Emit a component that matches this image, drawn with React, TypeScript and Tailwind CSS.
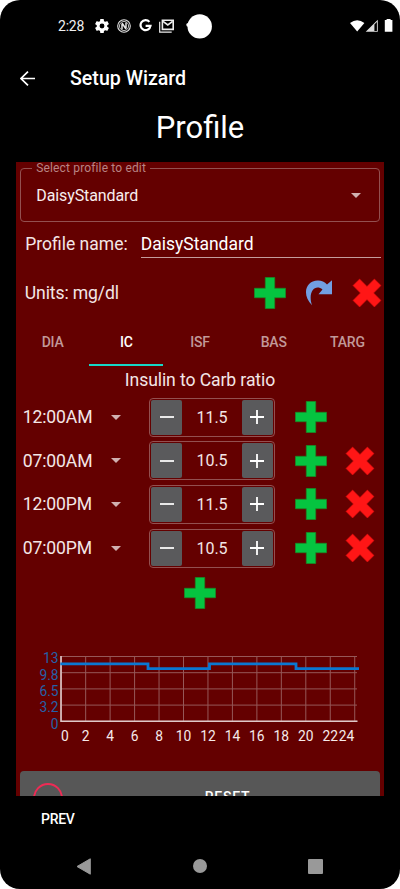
import React from "react";

function Plus({ className = "" }: { className?: string }) {
  return (
    <svg className={`h-8 w-8 shrink-0 ${className}`} viewBox="0 0 32 32">
      <path
        d="M11.3 .5h9.4v10.8h10.8v9.4H20.7v10.8h-9.4V20.7H.5v-9.4h10.8z"
        fill="#05c440"
        stroke="#1a8a26"
        strokeWidth="0.8"
      />
    </svg>
  );
}

function Cross({ className = "" }: { className?: string }) {
  return (
    <svg className={`h-[30px] w-[30px] shrink-0 ${className}`} viewBox="0 0 30 30">
      <path
        d="M7.6 1L15 8.4L22.4 1L29 7.6L21.6 15L29 22.4L22.4 29L15 21.6L7.6 29L1 22.4L8.4 15L1 7.6z"
        fill="#ff1616"
        stroke="#d80c0c"
        strokeWidth="0.6"
      />
    </svg>
  );
}

function Caret({ className = "" }: { className?: string }) {
  return (
    <svg className={`h-[5px] w-[10px] shrink-0 ${className}`} viewBox="0 0 10 5">
      <path d="M0 0h10L5 5z" fill="#d0b0b0" />
    </svg>
  );
}

function StatusBar() {
  return (
    <div className="relative flex h-[52px] items-center pb-[1px]">
      <span className="ml-[58px] w-[37px] text-[14px] leading-none tracking-[-0.2px] text-[#f0f0f0]">2:28</span>
      <svg className="h-[14px] w-[14px]" viewBox="2 2 20 20" fill="#fff">
        <path
          fillRule="evenodd"
          d="M19.43 12.98c.04-.32.07-.64.07-.98s-.03-.66-.07-.98l2.11-1.65c.19-.15.24-.42.12-.64l-2-3.46c-.12-.22-.39-.3-.61-.22l-2.49 1c-.52-.4-1.08-.73-1.69-.98l-.38-2.65A.49.49 0 0 0 14 2h-4c-.25 0-.46.18-.49.42l-.38 2.65c-.61.25-1.17.59-1.69.98l-2.49-1c-.23-.09-.49 0-.61.22l-2 3.46c-.13.22-.07.49.12.64l2.11 1.65c-.04.32-.07.65-.07.98s.03.66.07.98l-2.11 1.65c-.19.15-.24.42-.12.64l2 3.46c.12.22.39.3.61.22l2.49-1c.52.4 1.08.73 1.69.98l.38 2.65c.03.24.24.42.49.42h4c.25 0 .46-.18.49-.42l.38-2.65c.61-.25 1.17-.59 1.69-.98l2.49 1c.23.09.49 0 .61-.22l2-3.46c.12-.22.07-.49-.12-.64zM12 15.5a3.5 3.5 0 1 1 0-7 3.5 3.5 0 0 1 0 7z"
        />
      </svg>
      <svg className="ml-[7.5px] h-[14px] w-[14px]" viewBox="0 0 14 14" fill="none" stroke="#e4e4e4">
        <circle cx="7" cy="7" r="6.3" strokeWidth="1.1" />
        <circle cx="7" cy="7" r="4.6" strokeWidth="0.8" />
        <path d="M5 10.5V5M5 4l4 6M9 9.5V3.5" strokeWidth="1.5" />
      </svg>
      <svg className="ml-[8px] h-[13px] w-[13px]" viewBox="0 0 13 13" fill="none" stroke="#fff" strokeWidth="2.2">
        <path d="M10.4 2.9A5 5 0 1 0 11.5 6.9H6.6" />
      </svg>
      <svg className="ml-[7px] h-[14px] w-[15px]" viewBox="0 0 15 14" fill="none" stroke="#eee">
        <path d="M.7 2.8v10.3h12" strokeWidth="1.2" />
        <path d="M3.4 1.2h10.8v9.2H3.4z" strokeWidth="1.6" />
        <path d="M4 2.4l4.8 3.5L13.6 2.4" strokeWidth="1.7" />
      </svg>
      <svg className="absolute left-[186px] top-[13px] h-[26px] w-[26px]" viewBox="0 0 26 26" fill="#fff">
        <circle cx="13.7" cy="13.4" r="12.2" />
        <circle cx="2.2" cy="11.8" r="1.9" />
      </svg>
      <svg className="ml-auto h-[14px] w-[44px]" viewBox="0 0 44 14" fill="#fff">
        <path d="M0 4Q7.2 -1.6 14.4 4L7.2 12.6z" />
        <path d="M15.7 12.8L27.8 .8v12zM24.4 5.6v6.3h2.5V3.1z" fillRule="evenodd" fill="#ddd" />
        <path d="M36.6 1V0h4v1h1.8v11.8h-7.6V1z" />
      </svg>
      <div className="w-[6px]" />
    </div>
  );
}

function Stepper({ value }: { value: string }) {
  return (
    <div className="flex h-[39px] w-[126.5px] items-center justify-between rounded-[4px] border border-[#935050] p-[1.5px]">
      <div className="flex h-[35px] w-[31px] items-center justify-center rounded-[2px] bg-[#5a5a5c]">
        <div className="h-[2px] w-[14px] bg-[#e8e8e8]" />
      </div>
      <span className="pt-px text-[16px] text-[#f3e6e6]">{value}</span>
      <div className="flex h-[35px] w-[31px] items-center justify-center rounded-[2px] bg-[#5a5a5c]">
        <svg className="h-[14px] w-[14px]" viewBox="0 0 14 14" stroke="#fff" strokeWidth="1.8">
          <path d="M7 0v14M0 7h14" />
        </svg>
      </div>
    </div>
  );
}

const ratios = [
  { time: "12:00AM", value: "11.5", removable: false },
  { time: "07:00AM", value: "10.5", removable: true },
  { time: "12:00PM", value: "11.5", removable: true },
  { time: "07:00PM", value: "10.5", removable: true },
];

function RatioRow({ time, value, removable }: { time: string; value: string; removable: boolean }) {
  return (
    <div className="flex h-[43.6px] items-center">
      <span className="ml-[7px] w-[88px] text-[17.6px] tracking-[-0.15px] text-[#f3e6e6]">{time}</span>
      <Caret className="mr-[28px]" />
      <Stepper value={value} />
      <Plus className="ml-[20px]" />
      {removable && <Cross className="ml-[17.5px]" />}
    </div>
  );
}

const hours = [0, 2, 4, 6, 8, 10, 12, 14, 16, 18, 20, 22, 24];
const levels = ["13", "9.8", "6.5", "3.2", "0"];

function Chart() {
  return (
    <svg className="block h-[155px] w-[368px] shrink-0" viewBox="16 616 368 155">
      <g stroke="#955858" strokeWidth="1">
        {hours.map((h) => (
          <path key={h} d={`M${61.2 + h * 12.23} 656V721`} />
        ))}
        {levels.map((l, i) => (
          <path key={l} d={`M61 ${656.5 + i * 16.2}H357`} />
        ))}
      </g>
      <path d="M61 656V721.3H357.5" fill="none" stroke="#e0c8c8" strokeWidth="1.6" />
      <path
        d="M60.3 663.8H148V668.7H209.5V663.8H296V668.7H359"
        fill="none"
        stroke="#0a78d2"
        strokeWidth="2.8"
      />
      <g fontSize="13.8" fill="#2461a8" textAnchor="end">
        {levels.map((l, i) => (
          <text key={l} x="58.6" y={663.2 + i * 16.4}>
            {l}
          </text>
        ))}
      </g>
      <g fontSize="13.8" fill="#f6eaea" textAnchor="middle">
        {hours.map((h) => (
          <text key={h} x={h === 0 ? 65 : h === 24 ? 346.5 : 61.2 + h * 12.23} y="741.2">
            {h}
          </text>
        ))}
      </g>
    </svg>
  );
}

export default function App() {
  return (
    <div className="h-[889px] w-[400px] bg-white font-['Roboto',sans-serif]">
      <div className="flex h-full w-full flex-col overflow-hidden rounded-[20px] bg-black text-white">
        <StatusBar />
        <div className="flex h-[52px] items-center">
          <svg className="ml-[20px] h-[15px] w-[15px]" viewBox="0 0 15 15" fill="none" stroke="#fff" strokeWidth="1.7">
            <path d="M15 7.5H1M8 .6L1 7.5L8 14.4" />
          </svg>
          <h1 className="ml-[35px] pt-[2px] text-[19.6px] font-medium leading-none">Setup Wizard</h1>
        </div>
        <div className="flex h-[58px] items-center justify-center pb-[10px] text-[31px]">Profile</div>

        <div className="mx-auto flex h-[634px] w-[368.5px] shrink-0 flex-col overflow-hidden bg-[#640000]">
          <fieldset className="mx-[4.5px] h-[59.5px] shrink-0 rounded-[4px] border border-[#935050] px-[11px]">
            <legend className="px-[4px] text-[12px] leading-[12px] tracking-[0.15px] text-[#b88484]">
              Select profile to edit
            </legend>
            <div className="flex h-[43px] items-center justify-between pl-[4px] pr-[7px]">
              <span className="pt-px text-[16px] tracking-[-0.1px] text-[#f8eeee]">DaisyStandard</span>
              <Caret />
            </div>
          </fieldset>
          <div className="flex h-[46px] shrink-0 items-center">
            <span className="ml-[9.5px] w-[115.5px] text-[17.5px] text-[#f3e6e6]">Profile name:</span>
            <div className="flex h-[27px] w-[240px] items-center border-b border-[#c49c9c] text-[17.5px]">
              DaisyStandard
            </div>
          </div>
          <div className="flex h-[50px] shrink-0 items-center">
            <span className="ml-[9px] w-[229px] pt-px text-[17.6px] tracking-[-0.12px] text-[#f3e6e6]">Units: mg/dl</span>
            <Plus />
            <svg className="ml-[19px] h-[26px] w-[27px]" viewBox="0 0 27 26">
              <path
                d="M7 25.3C-3.5 15 .5 0.5 13 .6Q18.5 .6 22 4.6L27 .2V14.2H13.5L17.5 9.4C10 3.5 2.5 12 7 25.3z"
                fill="#729fe3"
              />
            </svg>
            <Cross className="ml-[20.5px]" />
          </div>
          <div className="flex h-[48px] shrink-0 text-[14px] font-medium tracking-[-0.2px]">
            <div className="flex flex-1 items-center justify-center pt-[2px] text-[#c19999]">DIA</div>
            <div className="flex flex-1 items-center justify-center border-b-2 border-[#16d8c8] pt-[3px]">IC</div>
            <div className="flex flex-1 items-center justify-center pt-[2px] text-[#c19999]">ISF</div>
            <div className="flex flex-1 items-center justify-center pt-[2px] text-[#c19999]">BAS</div>
            <div className="flex flex-1 items-center justify-center pt-[2px] text-[#c19999]">TARG</div>
          </div>
          <div className="flex h-[30px] shrink-0 items-center justify-center text-[17.6px] tracking-[-0.1px] text-[#f3e6e6]">
            Insulin to Carb ratio
          </div>
          <div className="shrink-0">
            {ratios.map((r) => (
              <RatioRow key={r.time} {...r} />
            ))}
          </div>
          <div className="flex h-[46.6px] shrink-0 items-center justify-center">
            <Plus />
          </div>
          <Chart />
          <div className="mx-[4.5px] flex h-[53px] shrink-0 items-center rounded-[4px] bg-[#575757]">
            <div className="ml-[13px] h-[30px] w-[30px] rounded-full border-[2.5px] border-[#ee2b55]" />
            <span className="flex-1 pl-[12px] text-center text-[14px] font-medium tracking-[0.7px]">
              RESET
            </span>
          </div>
        </div>

        <div className="flex h-[47px] shrink-0 items-center pl-[41px] text-[14px] font-medium tracking-[-0.3px]">PREV</div>
        <div className="flex h-[46px] items-center">
          <svg className="ml-[76px] h-[17px] w-[15px]" viewBox="0 0 15 17" fill="#999">
            <path d="M14.3 .8v15.4L1 8.5z" stroke="#999" strokeLinejoin="round" />
          </svg>
          <div className="ml-[101.5px] h-[14.5px] w-[14.5px] rounded-full bg-[#999]" />
          <div className="ml-[101px] h-[15px] w-[15px] rounded-[1px] bg-[#999]" />
        </div>
      </div>
    </div>
  );
}
